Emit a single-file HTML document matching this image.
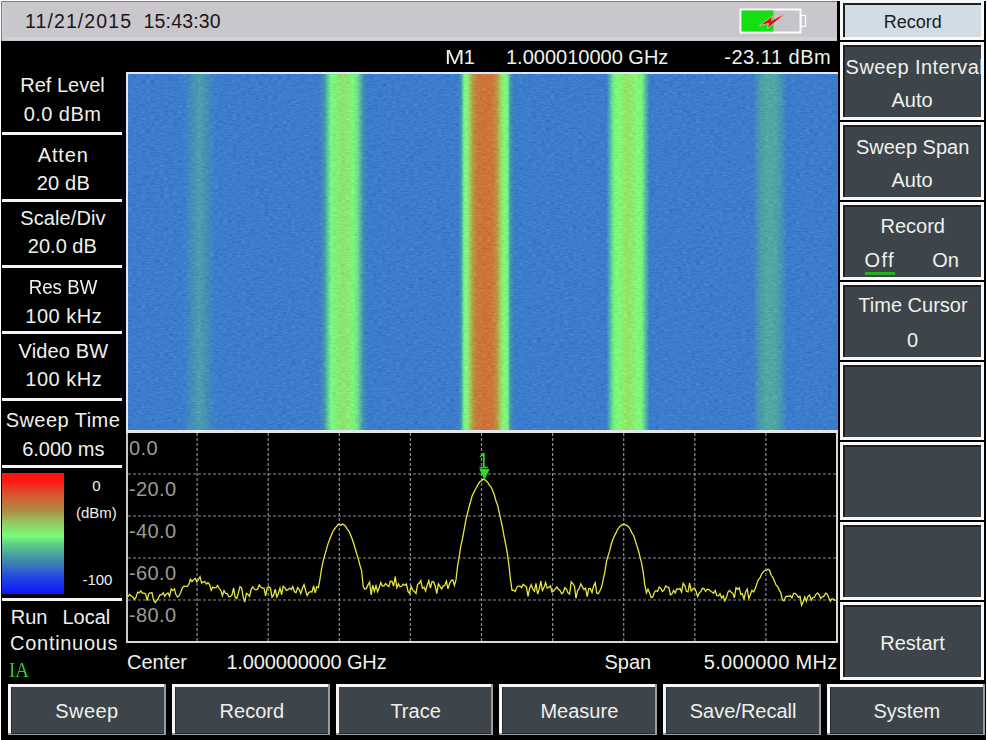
<!DOCTYPE html>
<html><head><meta charset="utf-8"><style>
html,body{margin:0;padding:0;background:#000;}
body{width:987px;height:740px;position:relative;overflow:hidden;font-family:"Liberation Sans", sans-serif;}
.r{position:absolute;}
.t{position:absolute;white-space:nowrap;}
</style></head><body>
<div class="r" style="left:0px;top:0px;width:987px;height:740px;background:#000;"></div>
<div class="r" style="left:0px;top:0px;width:1px;height:740px;background:#fff;"></div>
<div class="r" style="left:0px;top:0px;width:987px;height:1px;background:#fff;"></div>
<div class="r" style="left:986px;top:0px;width:1px;height:740px;background:#fff;"></div>
<div class="r" style="left:1px;top:1px;width:836px;height:40px;background:#7c7b7e;"></div>
<div class="r" style="left:2px;top:2px;width:835px;height:39px;background:#c9c7cb;"></div>
<div class="r" style="left:2px;top:37px;width:835px;height:3px;background:#d2d0d4;"></div>
<div class="r" style="left:2px;top:2px;width:2px;height:38px;background:#d0ced2;"></div>
<div class="t" style="top:11.99px;font-size:19.5px;line-height:19.5px;color:#1a1618;letter-spacing:1.1px;left:25.00px;">11/21/2015</div>
<div class="t" style="top:11.99px;font-size:19.5px;line-height:19.5px;color:#1a1618;letter-spacing:0.15px;left:143.60px;">15:43:30</div>
<svg class="r" style="left:736px;top:6px" width="74" height="32" viewBox="0 0 74 32">
<rect x="4.5" y="3.5" width="60" height="23" fill="#c6c4c8" stroke="#fbfbfb" stroke-width="2"/>
<rect x="5.5" y="4.5" width="32" height="21" fill="#12e012"/>
<rect x="65" y="9.5" width="4.5" height="11" fill="#c6c4c8" stroke="#fbfbfb" stroke-width="1.4"/>
<path d="M23.5 19.5 L36.5 10 L35.5 14.5 L50 7 L31.5 22.5 L32.5 17.5 Z" fill="#d81010" stroke="#f8c0b8" stroke-width="0.8" stroke-linejoin="round"/>
</svg>
<div class="t" style="top:47.37px;font-size:20px;line-height:20px;color:#f0f0ea;left:444.60px;transform:scaleX(1.16);transform-origin:0 0;">M</div>
<div class="t" style="top:47.37px;font-size:20px;line-height:20px;color:#f0f0ea;left:463.70px;">1</div>
<div class="t" style="top:47.37px;font-size:20px;line-height:20px;color:#f0f0ea;left:506.00px;">1.000010000 GHz</div>
<div class="t" style="top:47.37px;font-size:20px;line-height:20px;color:#f0f0ea;letter-spacing:0.5px;left:724.30px;">-23.11 dBm</div>
<div class="r" style="left:126px;top:72px;width:712px;height:361px;background:#dfe8f6;"></div>
<svg width="0" height="0" style="position:absolute"><filter id="nz" x="0" y="0" width="100%" height="100%" color-interpolation-filters="sRGB"><feTurbulence type="fractalNoise" baseFrequency="0.22 0.7" numOctaves="2" seed="5" result="t"/><feColorMatrix in="t" type="matrix" values="0.33 0.33 0.33 0 0  0.33 0.33 0.33 0 0  0.33 0.33 0.33 0 0  0 0 0 0 1" result="g"/><feComposite in="SourceGraphic" in2="g" operator="arithmetic" k1="0" k2="1" k3="0.24" k4="-0.12"/></filter></svg>
<div class="r" style="left:128px;top:74px;width:710px;height:356px;background:linear-gradient(90deg,rgb(60,124,204) 0px,rgb(60,124,204) 54.0px,rgb(66,140,186) 63.0px,rgb(78,158,172) 71.5px,rgb(66,140,186) 80.0px,rgb(60,124,204) 89.0px,rgb(60,124,204) 191.5px,rgb(70,150,170) 196.5px,rgb(112,235,135) 202.0px,rgb(120,248,128) 203.5px,rgb(145,225,110) 214.6px,rgb(125,245,120) 225.5px,rgb(110,222,148) 229.5px,rgb(65,145,175) 235.0px,rgb(60,124,204) 239.5px,rgb(60,124,204) 329.8px,rgb(62,152,170) 333.0px,rgb(125,240,130) 336.0px,rgb(130,248,125) 338.5px,rgb(150,220,100) 341.0px,rgb(185,150,70) 345.0px,rgb(200,122,58) 349.0px,rgb(205,115,55) 357.0px,rgb(200,122,58) 365.0px,rgb(185,150,70) 369.0px,rgb(150,220,100) 373.0px,rgb(130,248,125) 376.0px,rgb(125,240,130) 379.5px,rgb(62,152,170) 382.5px,rgb(60,124,204) 386.0px,rgb(60,124,204) 478.5px,rgb(80,185,160) 482.0px,rgb(118,242,128) 486.0px,rgb(128,250,122) 490.0px,rgb(148,226,102) 500.0px,rgb(128,250,122) 510.0px,rgb(118,242,128) 514.0px,rgb(80,180,160) 518.0px,rgb(60,124,204) 521.5px,rgb(60,124,204) 625.0px,rgb(74,156,172) 632.0px,rgb(82,168,162) 639.0px,rgb(80,166,165) 647.0px,rgb(70,150,178) 653.0px,rgb(60,124,204) 659.0px);filter:url(#nz);"></div>
<div class="r" style="left:126px;top:430px;width:712px;height:3px;background:#e2e6ea;"></div>
<div class="r" style="left:126px;top:433px;width:2px;height:210px;background:#c8c8c8;"></div>
<div class="r" style="left:836px;top:433px;width:2px;height:210px;background:#d8d8d8;"></div>
<div class="r" style="left:126px;top:641px;width:712px;height:2px;background:#d8d8d8;"></div>
<svg class="r" style="left:0;top:0" width="987" height="740" viewBox="0 0 987 740">
<line x1="197.1" y1="433" x2="197.1" y2="641" stroke="#8e8e8e" stroke-width="1.2" stroke-dasharray="3 2"/>
<line x1="268.2" y1="433" x2="268.2" y2="641" stroke="#8e8e8e" stroke-width="1.2" stroke-dasharray="3 2"/>
<line x1="339.3" y1="433" x2="339.3" y2="641" stroke="#8e8e8e" stroke-width="1.2" stroke-dasharray="3 2"/>
<line x1="410.4" y1="433" x2="410.4" y2="641" stroke="#8e8e8e" stroke-width="1.2" stroke-dasharray="3 2"/>
<line x1="481.5" y1="433" x2="481.5" y2="641" stroke="#8e8e8e" stroke-width="1.2" stroke-dasharray="3 2"/>
<line x1="552.6" y1="433" x2="552.6" y2="641" stroke="#8e8e8e" stroke-width="1.2" stroke-dasharray="3 2"/>
<line x1="623.7" y1="433" x2="623.7" y2="641" stroke="#8e8e8e" stroke-width="1.2" stroke-dasharray="3 2"/>
<line x1="694.8" y1="433" x2="694.8" y2="641" stroke="#8e8e8e" stroke-width="1.2" stroke-dasharray="3 2"/>
<line x1="765.9" y1="433" x2="765.9" y2="641" stroke="#8e8e8e" stroke-width="1.2" stroke-dasharray="3 2"/>
<line x1="128" y1="474" x2="836" y2="474" stroke="#8e8e8e" stroke-width="1.2" stroke-dasharray="3 2"/>
<line x1="128" y1="516" x2="836" y2="516" stroke="#8e8e8e" stroke-width="1.2" stroke-dasharray="3 2"/>
<line x1="128" y1="558" x2="836" y2="558" stroke="#8e8e8e" stroke-width="1.2" stroke-dasharray="3 2"/>
<line x1="128" y1="600" x2="836" y2="600" stroke="#8e8e8e" stroke-width="1.2" stroke-dasharray="3 2"/>
<polyline fill="none" stroke="#e8e83a" stroke-width="1.3" points="128.0,596.7 129.6,594.2 131.2,596.0 132.8,596.9 134.4,599.3 136.0,597.4 137.6,592.1 139.2,592.9 140.8,590.9 142.4,593.1 144.0,593.2 145.6,593.9 147.2,600.7 148.8,593.7 150.4,592.8 152.0,592.6 153.6,600.3 155.2,602.7 156.8,600.4 158.4,598.1 160.0,594.6 161.6,594.8 163.2,592.8 164.8,596.3 166.4,593.9 168.0,592.9 169.6,596.3 171.2,588.8 172.8,590.6 174.4,588.9 176.0,594.8 177.6,597.0 179.2,595.7 180.8,592.3 182.4,587.7 184.0,586.1 185.6,586.3 187.2,586.4 188.8,584.4 190.4,579.3 192.0,581.6 193.6,579.6 195.2,578.4 196.8,581.8 198.4,579.7 200.0,576.7 201.6,583.0 203.2,581.9 204.8,581.7 206.4,584.1 208.0,582.7 209.6,584.6 211.2,590.3 212.8,587.1 214.4,587.9 216.0,587.7 217.6,585.4 219.2,588.4 220.8,590.2 222.4,595.8 224.0,590.6 225.6,593.4 227.2,593.7 228.8,596.7 230.4,596.5 232.0,594.9 233.6,587.9 235.2,597.6 236.8,598.5 238.4,592.7 240.0,586.6 241.6,587.9 243.2,597.1 244.8,602.0 246.4,593.3 248.0,594.5 249.6,596.2 251.2,589.3 252.8,586.7 254.4,589.3 256.0,589.8 257.6,589.2 259.2,584.9 260.8,587.1 262.4,588.1 264.0,588.2 265.6,595.8 267.2,587.9 268.8,586.7 270.4,587.9 272.0,597.1 273.6,595.1 275.2,589.2 276.8,596.9 278.4,593.4 280.0,588.0 281.6,594.7 283.2,586.3 284.8,587.6 286.4,590.4 288.0,589.6 289.6,588.1 291.2,589.6 292.8,586.4 294.4,591.8 296.0,592.6 297.6,587.6 299.2,589.7 300.8,593.6 302.4,588.2 304.0,584.7 305.6,590.5 307.2,595.5 308.8,592.6 310.4,591.7 312.0,592.0 313.6,586.0 315.2,592.9 316.8,586.7 318.4,587.7 320.0,579.0 321.6,568.6 323.2,560.9 324.8,555.1 326.4,549.4 328.0,543.9 329.6,539.4 331.2,535.5 332.8,531.7 334.4,529.0 336.0,527.2 337.6,524.9 339.2,524.2 340.8,525.3 342.4,524.1 344.0,524.9 345.6,526.2 347.2,528.9 348.8,531.1 350.4,534.6 352.0,538.5 353.6,543.2 355.2,548.7 356.8,553.9 358.4,559.3 360.0,565.5 361.6,570.8 363.2,586.3 364.8,589.2 366.4,588.5 368.0,584.9 369.6,582.2 371.2,594.8 372.8,585.2 374.4,591.3 376.0,585.6 377.6,591.6 379.2,587.5 380.8,582.6 382.4,586.0 384.0,585.8 385.6,583.5 387.2,585.2 388.8,586.6 390.4,581.2 392.0,581.3 393.6,586.1 395.2,576.7 396.8,587.8 398.4,583.8 400.0,586.8 401.6,586.3 403.2,584.1 404.8,585.2 406.4,584.0 408.0,591.4 409.6,593.5 411.2,586.6 412.8,590.2 414.4,591.5 416.0,593.4 417.6,584.3 419.2,583.4 420.8,580.5 422.4,588.3 424.0,587.3 425.6,591.0 427.2,585.4 428.8,580.7 430.4,588.2 432.0,581.7 433.6,581.8 435.2,586.0 436.8,593.7 438.4,583.9 440.0,586.4 441.6,588.9 443.2,586.1 444.8,585.2 446.4,581.1 448.0,588.8 449.6,583.5 451.2,580.6 452.8,579.9 454.4,585.5 456.0,579.9 457.6,566.0 459.2,556.5 460.8,546.2 462.4,539.1 464.0,530.4 465.6,521.4 467.2,514.5 468.8,508.0 470.4,502.3 472.0,496.3 473.6,493.0 475.2,489.8 476.8,486.8 478.4,483.9 480.0,481.6 481.6,480.7 483.2,479.0 484.8,479.8 486.4,481.1 488.0,482.8 489.6,485.6 491.2,487.1 492.8,491.1 494.4,495.3 496.0,501.0 497.6,505.3 499.2,512.4 500.8,519.7 502.4,527.0 504.0,535.8 505.6,543.8 507.2,552.6 508.8,564.0 510.4,578.8 512.0,590.3 513.6,590.2 515.2,591.4 516.8,587.3 518.4,586.2 520.0,586.2 521.6,587.4 523.2,584.2 524.8,585.7 526.4,586.9 528.0,596.3 529.6,588.5 531.2,584.7 532.8,589.3 534.4,591.3 536.0,583.3 537.6,594.1 539.2,589.4 540.8,581.1 542.4,590.5 544.0,587.6 545.6,582.5 547.2,588.1 548.8,587.4 550.4,586.0 552.0,592.0 553.6,590.9 555.2,589.2 556.8,586.9 558.4,589.2 560.0,590.5 561.6,593.8 563.2,592.5 564.8,587.7 566.4,589.0 568.0,592.9 569.6,594.0 571.2,581.8 572.8,583.6 574.4,586.0 576.0,598.2 577.6,590.5 579.2,588.6 580.8,583.8 582.4,586.9 584.0,589.6 585.6,588.3 587.2,596.7 588.8,588.6 590.4,588.7 592.0,592.5 593.6,586.3 595.2,582.8 596.8,593.2 598.4,593.7 600.0,590.5 601.6,587.1 603.2,579.7 604.8,572.5 606.4,561.8 608.0,556.2 609.6,551.2 611.2,544.5 612.8,539.8 614.4,535.9 616.0,532.9 617.6,529.3 619.2,527.4 620.8,525.5 622.4,524.6 624.0,524.0 625.6,525.2 627.2,525.7 628.8,527.2 630.4,529.5 632.0,533.1 633.6,535.5 635.2,540.3 636.8,545.6 638.4,550.5 640.0,556.9 641.6,563.2 643.2,572.2 644.8,584.9 646.4,593.0 648.0,589.1 649.6,592.9 651.2,597.6 652.8,596.9 654.4,592.1 656.0,590.7 657.6,591.4 659.2,587.0 660.8,588.4 662.4,591.5 664.0,590.2 665.6,586.0 667.2,587.2 668.8,587.4 670.4,594.9 672.0,593.9 673.6,590.4 675.2,593.0 676.8,588.9 678.4,589.4 680.0,588.4 681.6,592.1 683.2,583.4 684.8,585.5 686.4,591.3 688.0,591.9 689.6,583.2 691.2,591.0 692.8,589.0 694.4,588.1 696.0,591.3 697.6,596.4 699.2,593.1 700.8,591.5 702.4,588.3 704.0,588.5 705.6,591.3 707.2,589.2 708.8,589.7 710.4,591.0 712.0,592.0 713.6,593.3 715.2,590.4 716.8,595.7 718.4,595.8 720.0,593.6 721.6,598.2 723.2,595.9 724.8,600.8 726.4,597.5 728.0,592.1 729.6,590.5 731.2,592.2 732.8,593.3 734.4,597.9 736.0,587.7 737.6,589.3 739.2,587.7 740.8,594.3 742.4,593.8 744.0,599.5 745.6,591.9 747.2,589.1 748.8,598.4 750.4,594.5 752.0,590.3 753.6,591.9 755.2,589.1 756.8,583.9 758.4,579.5 760.0,577.9 761.6,574.0 763.2,571.9 764.8,570.5 766.4,570.1 768.0,569.3 769.6,570.2 771.2,575.3 772.8,577.3 774.4,581.1 776.0,584.9 777.6,586.6 779.2,589.9 780.8,592.8 782.4,600.0 784.0,600.8 785.6,596.7 787.2,596.2 788.8,596.4 790.4,595.6 792.0,597.9 793.6,593.4 795.2,593.3 796.8,594.9 798.4,597.4 800.0,596.4 801.6,605.3 803.2,601.7 804.8,597.0 806.4,601.2 808.0,596.3 809.6,595.1 811.2,600.2 812.8,597.7 814.4,597.2 816.0,594.3 817.6,592.9 819.2,594.9 820.8,598.4 822.4,596.9 824.0,596.2 825.6,593.2 827.2,593.9 828.8,597.7 830.4,601.1 832.0,598.7 833.6,599.3 835.2,600.8"/>
<path d="M479.3 469 L489.7 469 L484.5 479.8 Z" fill="#22e022"/>
<path d="M482.9 453 L484.7 453 L484.7 466.8 L487.8 466.8 L487.8 468.3 L479.6 468.3 L479.6 466.8 L482.9 466.8 L482.9 455.8 L479.8 457.6 L479.8 456.3 Z" fill="#22dd22"/>
</svg>
<div class="t" style="top:437.57px;font-size:20px;line-height:20px;color:#9c9a94;letter-spacing:0.4px;left:129.00px;">0.0</div>
<div class="t" style="top:479.37px;font-size:20px;line-height:20px;color:#9c9a94;letter-spacing:0.4px;left:129.00px;">-20.0</div>
<div class="t" style="top:521.17px;font-size:20px;line-height:20px;color:#9c9a94;letter-spacing:0.4px;left:129.00px;">-40.0</div>
<div class="t" style="top:562.97px;font-size:20px;line-height:20px;color:#9c9a94;letter-spacing:0.4px;left:129.00px;">-60.0</div>
<div class="t" style="top:604.77px;font-size:20px;line-height:20px;color:#9c9a94;letter-spacing:0.4px;left:129.00px;">-80.0</div>
<div class="t" style="top:652.27px;font-size:20px;line-height:20px;color:#f0f0ea;left:127.00px;">Center</div>
<div class="t" style="top:652.27px;font-size:20px;line-height:20px;color:#f0f0ea;letter-spacing:-0.15px;left:226.40px;">1.000000000 GHz</div>
<div class="t" style="top:652.27px;font-size:20px;line-height:20px;color:#f0f0ea;left:604.50px;">Span</div>
<div class="t" style="top:652.27px;font-size:20px;line-height:20px;color:#f0f0ea;letter-spacing:0.3px;left:703.80px;">5.000000 MHz</div>
<div class="r" style="left:2px;top:132px;width:120px;height:3px;background:#f4f4f4;"></div>
<div class="r" style="left:2px;top:199px;width:120px;height:3px;background:#f4f4f4;"></div>
<div class="r" style="left:2px;top:265px;width:120px;height:3px;background:#f4f4f4;"></div>
<div class="r" style="left:2px;top:331px;width:120px;height:3px;background:#f4f4f4;"></div>
<div class="r" style="left:2px;top:398px;width:120px;height:3px;background:#f4f4f4;"></div>
<div class="r" style="left:2px;top:465px;width:120px;height:3px;background:#f4f4f4;"></div>
<div class="r" style="left:2px;top:598px;width:120px;height:3px;background:#f4f4f4;"></div>
<div class="t" style="top:75.37px;font-size:20px;line-height:20px;color:#f0f0ea;left:-237.50px;width:600px;text-align:center;">Ref Level</div>
<div class="t" style="top:103.77px;font-size:20px;line-height:20px;color:#f0f0ea;letter-spacing:0.45px;left:-237.47px;width:600px;text-align:center;">0.0 dBm</div>
<div class="t" style="top:144.57px;font-size:20px;line-height:20px;color:#f0f0ea;letter-spacing:0.9px;left:-236.75px;width:600px;text-align:center;">Atten</div>
<div class="t" style="top:172.77px;font-size:20px;line-height:20px;color:#f0f0ea;letter-spacing:0.2px;left:-236.70px;width:600px;text-align:center;">20 dB</div>
<div class="t" style="top:208.37px;font-size:20px;line-height:20px;color:#f0f0ea;letter-spacing:0.1px;left:-237.05px;width:600px;text-align:center;">Scale/Div</div>
<div class="t" style="top:235.77px;font-size:20px;line-height:20px;color:#f0f0ea;left:-237.70px;width:600px;text-align:center;">20.0 dB</div>
<div class="t" style="top:277.27px;font-size:20px;line-height:20px;color:#f0f0ea;left:-237.10px;width:600px;text-align:center;transform:scaleX(0.935);transform-origin:50% 0;">Res BW</div>
<div class="t" style="top:305.57px;font-size:20px;line-height:20px;color:#f0f0ea;letter-spacing:0.5px;left:-236.25px;width:600px;text-align:center;">100 kHz</div>
<div class="t" style="top:341.07px;font-size:20px;line-height:20px;color:#f0f0ea;letter-spacing:0.15px;left:-236.53px;width:600px;text-align:center;">Video BW</div>
<div class="t" style="top:369.47px;font-size:20px;line-height:20px;color:#f0f0ea;letter-spacing:0.5px;left:-236.25px;width:600px;text-align:center;">100 kHz</div>
<div class="t" style="top:410.47px;font-size:20px;line-height:20px;color:#f0f0ea;letter-spacing:0.45px;left:-237.07px;width:600px;text-align:center;">Sweep Time</div>
<div class="t" style="top:438.67px;font-size:20px;line-height:20px;color:#f0f0ea;left:-236.70px;width:600px;text-align:center;">6.000 ms</div>
<div class="r" style="left:2px;top:472.6px;width:62px;height:121.4px;background:linear-gradient(180deg,#ff100c 0%,#ff140e 6%,#e1462a 15%,#c86e37 24%,#aa9146 32%,#96c85f 41%,#78fa78 52%,#5ac88c 60%,#4196a5 70%,#3778b9 77%,#2850dc 84%,#0a14fa 100%);"></div>
<div class="t" style="top:477.80px;font-size:15px;line-height:15px;color:#f0f0ea;left:-203.50px;width:600px;text-align:center;">0</div>
<div class="t" style="top:504.80px;font-size:15px;line-height:15px;color:#f0f0ea;left:-203.60px;width:600px;text-align:center;">(dBm)</div>
<div class="t" style="top:572.40px;font-size:15px;line-height:15px;color:#f0f0ea;left:-202.60px;width:600px;text-align:center;">-100</div>
<div class="t" style="top:607.07px;font-size:20px;line-height:20px;color:#f0f0ea;left:10.80px;">Run</div>
<div class="t" style="top:607.07px;font-size:20px;line-height:20px;color:#f0f0ea;left:62.50px;">Local</div>
<div class="t" style="top:633.07px;font-size:20px;line-height:20px;color:#f0f0ea;letter-spacing:0.7px;left:10.10px;">Continuous</div>
<div class="t" style="top:658.97px;font-size:22px;line-height:22px;color:#2ad02a;left:9.30px;transform:scaleX(0.86);transform-origin:0 0;font-family:'Liberation Serif',serif;">IA</div>
<div class="r" style="left:840px;top:0px;width:144px;height:40px;background:#f8f8f8;"></div>
<div class="r" style="left:843px;top:3px;width:138px;height:34px;background:#1c2024;"></div>
<div class="r" style="left:845px;top:5px;width:136px;height:32px;background:#d2dce4;"></div>
<div class="t" style="top:13.16px;font-size:18px;line-height:18px;color:#1a1c22;left:612.70px;width:600px;text-align:center;">Record</div>
<div class="r" style="left:840px;top:42px;width:144px;height:78px;background:#f8f8f8;"></div>
<div class="r" style="left:843px;top:45px;width:138px;height:72px;background:#1c2024;"></div>
<div class="r" style="left:845px;top:47px;width:136px;height:70px;background:#3d454a;"></div>
<div class="r" style="left:840px;top:122px;width:144px;height:78px;background:#f8f8f8;"></div>
<div class="r" style="left:843px;top:125px;width:138px;height:72px;background:#1c2024;"></div>
<div class="r" style="left:845px;top:127px;width:136px;height:70px;background:#3d454a;"></div>
<div class="r" style="left:840px;top:202px;width:144px;height:78px;background:#f8f8f8;"></div>
<div class="r" style="left:843px;top:205px;width:138px;height:72px;background:#1c2024;"></div>
<div class="r" style="left:845px;top:207px;width:136px;height:70px;background:#3d454a;"></div>
<div class="r" style="left:840px;top:282px;width:144px;height:78px;background:#f8f8f8;"></div>
<div class="r" style="left:843px;top:285px;width:138px;height:72px;background:#1c2024;"></div>
<div class="r" style="left:845px;top:287px;width:136px;height:70px;background:#3d454a;"></div>
<div class="r" style="left:840px;top:362px;width:144px;height:78px;background:#f8f8f8;"></div>
<div class="r" style="left:843px;top:365px;width:138px;height:72px;background:#1c2024;"></div>
<div class="r" style="left:845px;top:367px;width:136px;height:70px;background:#3d454a;"></div>
<div class="r" style="left:840px;top:442px;width:144px;height:78px;background:#f8f8f8;"></div>
<div class="r" style="left:843px;top:445px;width:138px;height:72px;background:#1c2024;"></div>
<div class="r" style="left:845px;top:447px;width:136px;height:70px;background:#3d454a;"></div>
<div class="r" style="left:840px;top:522px;width:144px;height:78px;background:#f8f8f8;"></div>
<div class="r" style="left:843px;top:525px;width:138px;height:72px;background:#1c2024;"></div>
<div class="r" style="left:845px;top:527px;width:136px;height:70px;background:#3d454a;"></div>
<div class="r" style="left:840px;top:602px;width:144px;height:78px;background:#f8f8f8;"></div>
<div class="r" style="left:843px;top:605px;width:138px;height:72px;background:#1c2024;"></div>
<div class="r" style="left:845px;top:607px;width:136px;height:70px;background:#3d454a;"></div>
<div class="r" style="left:845px;top:47px;width:136px;height:40px;overflow:hidden">
<div class="t" style="top:9.57px;font-size:20px;line-height:20px;color:#f0f0ea;letter-spacing:0.45px;left:0.60px;">Sweep Interval</div>
</div>
<div class="t" style="top:90.07px;font-size:20px;line-height:20px;color:#f0f0ea;left:612.00px;width:600px;text-align:center;">Auto</div>
<div class="t" style="top:136.57px;font-size:20px;line-height:20px;color:#f0f0ea;left:612.60px;width:600px;text-align:center;">Sweep Span</div>
<div class="t" style="top:170.07px;font-size:20px;line-height:20px;color:#f0f0ea;left:612.00px;width:600px;text-align:center;">Auto</div>
<div class="t" style="top:215.77px;font-size:20px;line-height:20px;color:#f0f0ea;left:612.70px;width:600px;text-align:center;">Record</div>
<div class="t" style="top:250.47px;font-size:20px;line-height:20px;color:#f0f0ea;letter-spacing:1.4px;left:864.50px;">Off</div>
<div class="t" style="top:250.47px;font-size:20px;line-height:20px;color:#f0f0ea;left:932.20px;">On</div>
<div class="r" style="left:865px;top:272px;width:30px;height:3px;background:#22b022;"></div>
<div class="t" style="top:294.77px;font-size:20px;line-height:20px;color:#f0f0ea;left:613.00px;width:600px;text-align:center;">Time Cursor</div>
<div class="t" style="top:330.07px;font-size:20px;line-height:20px;color:#f0f0ea;left:612.60px;width:600px;text-align:center;">0</div>
<div class="t" style="top:633.37px;font-size:20px;line-height:20px;color:#f0f0ea;left:612.50px;width:600px;text-align:center;">Restart</div>
<div class="r" style="left:8.1px;top:683.7px;width:157.8px;height:51.8px;background:#9a9c9e;"></div>
<div class="r" style="left:8.1px;top:683.7px;width:155.8px;height:49.8px;background:#f6f6f6;"></div>
<div class="r" style="left:11.1px;top:686.5px;width:152.8px;height:47px;background:#262c30;"></div>
<div class="r" style="left:11.899999999999999px;top:687.3px;width:152px;height:46.2px;background:#3d454a;"></div>
<div class="t" style="top:701.47px;font-size:20px;line-height:20px;color:#f0f0ea;letter-spacing:0.4px;left:-213.10px;width:600px;text-align:center;">Sweep</div>
<div class="r" style="left:171.85px;top:683.7px;width:157.8px;height:51.8px;background:#9a9c9e;"></div>
<div class="r" style="left:171.85px;top:683.7px;width:155.8px;height:49.8px;background:#f6f6f6;"></div>
<div class="r" style="left:174.85px;top:686.5px;width:152.8px;height:47px;background:#262c30;"></div>
<div class="r" style="left:175.65px;top:687.3px;width:152px;height:46.2px;background:#3d454a;"></div>
<div class="t" style="top:701.47px;font-size:20px;line-height:20px;color:#f0f0ea;left:-48.15px;width:600px;text-align:center;">Record</div>
<div class="r" style="left:335.6px;top:683.7px;width:157.8px;height:51.8px;background:#9a9c9e;"></div>
<div class="r" style="left:335.6px;top:683.7px;width:155.8px;height:49.8px;background:#f6f6f6;"></div>
<div class="r" style="left:338.6px;top:686.5px;width:152.8px;height:47px;background:#262c30;"></div>
<div class="r" style="left:339.40000000000003px;top:687.3px;width:152px;height:46.2px;background:#3d454a;"></div>
<div class="t" style="top:701.47px;font-size:20px;line-height:20px;color:#f0f0ea;left:115.60px;width:600px;text-align:center;">Trace</div>
<div class="r" style="left:499.35px;top:683.7px;width:157.8px;height:51.8px;background:#9a9c9e;"></div>
<div class="r" style="left:499.35px;top:683.7px;width:155.8px;height:49.8px;background:#f6f6f6;"></div>
<div class="r" style="left:502.35px;top:686.5px;width:152.8px;height:47px;background:#262c30;"></div>
<div class="r" style="left:503.15000000000003px;top:687.3px;width:152px;height:46.2px;background:#3d454a;"></div>
<div class="t" style="top:701.47px;font-size:20px;line-height:20px;color:#f0f0ea;left:279.35px;width:600px;text-align:center;">Measure</div>
<div class="r" style="left:663.1px;top:683.7px;width:157.8px;height:51.8px;background:#9a9c9e;"></div>
<div class="r" style="left:663.1px;top:683.7px;width:155.8px;height:49.8px;background:#f6f6f6;"></div>
<div class="r" style="left:666.1px;top:686.5px;width:152.8px;height:47px;background:#262c30;"></div>
<div class="r" style="left:666.9px;top:687.3px;width:152px;height:46.2px;background:#3d454a;"></div>
<div class="t" style="top:701.47px;font-size:20px;line-height:20px;color:#f0f0ea;left:443.10px;width:600px;text-align:center;">Save/Recall</div>
<div class="r" style="left:826.85px;top:683.7px;width:157.8px;height:51.8px;background:#9a9c9e;"></div>
<div class="r" style="left:826.85px;top:683.7px;width:155.8px;height:49.8px;background:#f6f6f6;"></div>
<div class="r" style="left:829.85px;top:686.5px;width:152.8px;height:47px;background:#262c30;"></div>
<div class="r" style="left:830.65px;top:687.3px;width:152px;height:46.2px;background:#3d454a;"></div>
<div class="t" style="top:701.47px;font-size:20px;line-height:20px;color:#f0f0ea;left:606.85px;width:600px;text-align:center;">System</div>
</body></html>
